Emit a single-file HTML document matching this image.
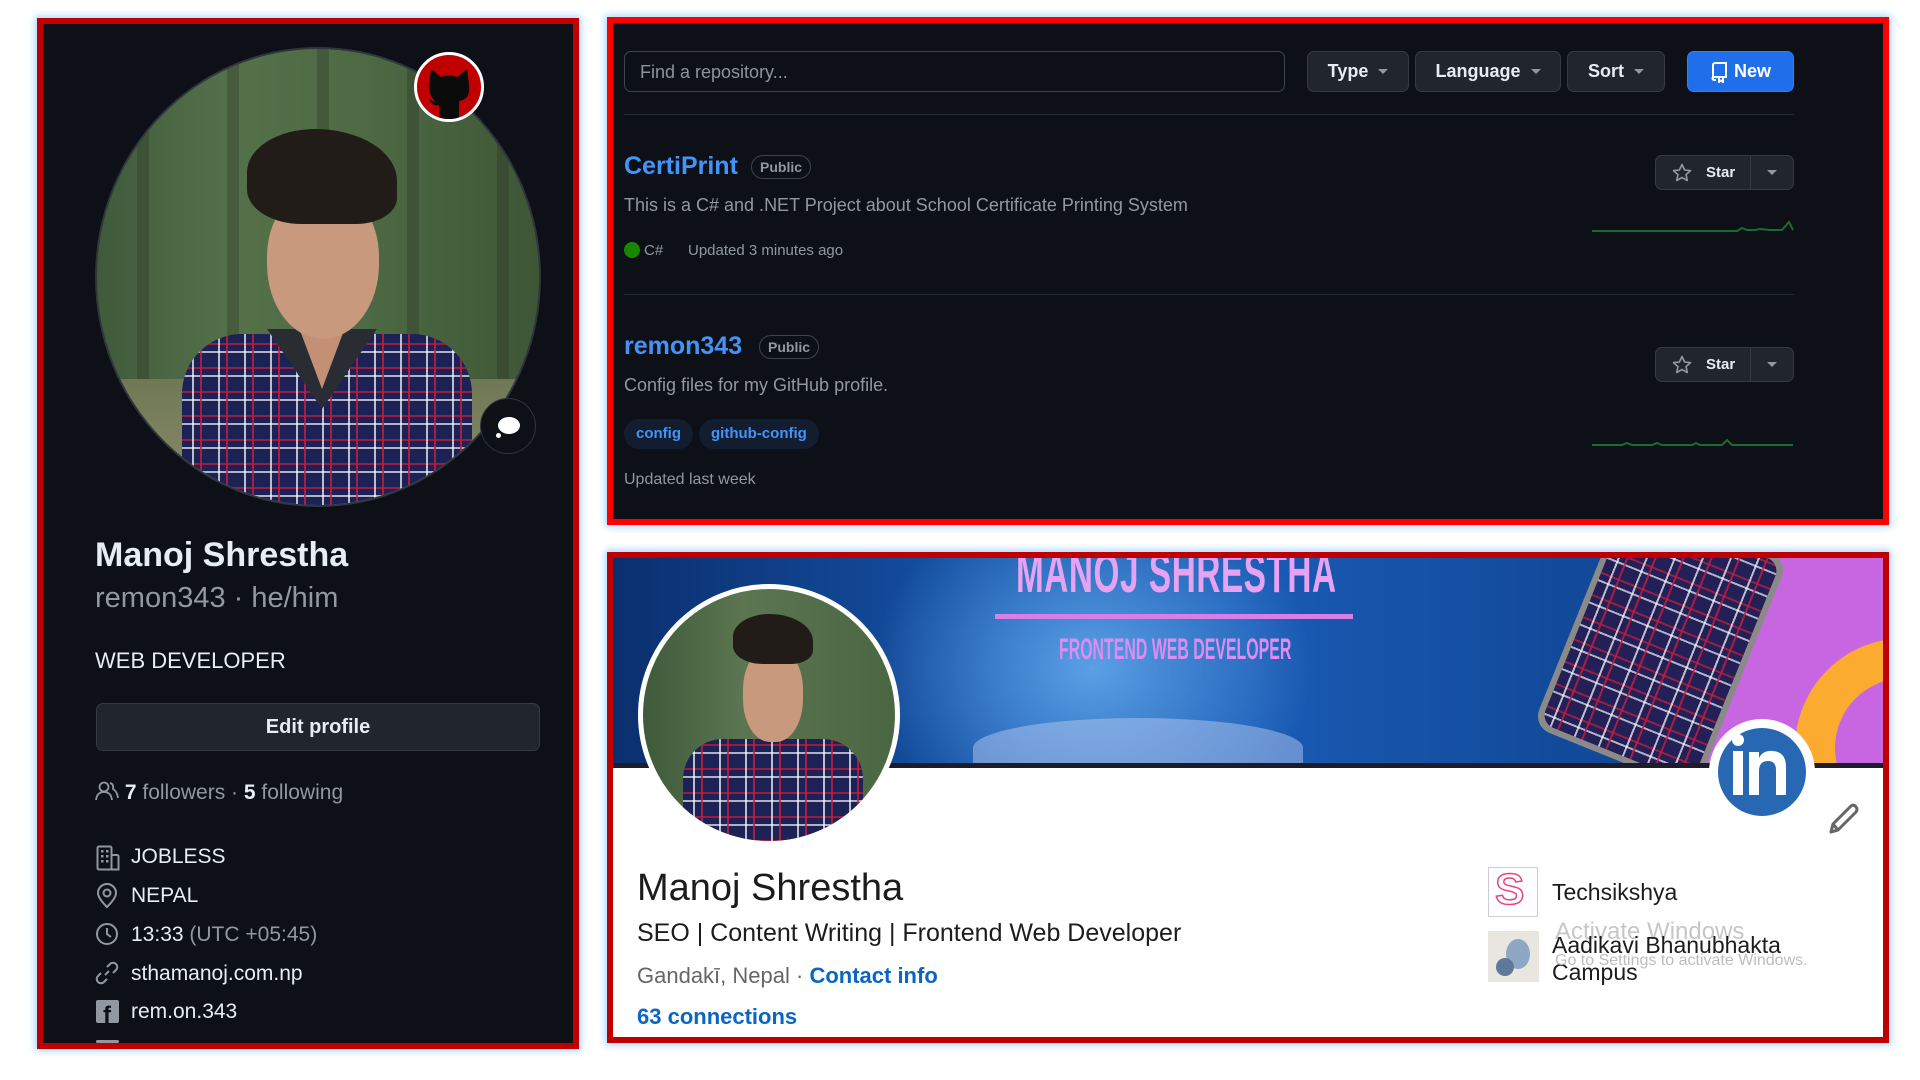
<!DOCTYPE html>
<html><head><meta charset="utf-8">
<style>
*{box-sizing:border-box;margin:0;padding:0}
body{width:1920px;height:1080px;background:#fff;position:relative;overflow:hidden;font-family:"Liberation Sans",sans-serif}
.abs{position:absolute}
.panel{position:absolute;box-shadow:0 0 7px 2px #a8d6ff}
.t{position:absolute;white-space:nowrap}
.gh{color:#e6edf3}
.btn{position:absolute;background:#21262d;border:1px solid #363b42;border-radius:7px;color:#e6edf3;font-weight:bold;font-size:18px;display:flex;align-items:center;justify-content:center}
.caret{display:inline-block;width:0;height:0;border-left:5px solid transparent;border-right:5px solid transparent;border-top:5px solid #9198a1;margin-left:10px}
.plaid{background:
 repeating-linear-gradient(90deg,transparent 0 10px,rgba(255,255,255,.7) 10px 12px,transparent 12px 18px,rgba(200,30,60,.8) 18px 20px,transparent 20px 26px),
 repeating-linear-gradient(0deg,transparent 0 9px,rgba(255,255,255,.65) 9px 11px,transparent 11px 17px,rgba(200,30,60,.7) 17px 19px,transparent 19px 24px),
 #1c2256}
.public{position:absolute;border:1px solid #3d444d;border-radius:12px;color:#9198a1;font-size:14px;font-weight:bold;height:24px;line-height:22px;padding:0 8px}
.tag{position:absolute;background:#121d2f;color:#4493f8;border-radius:15px;font-size:15px;font-weight:bold;height:30px;line-height:30px;padding:0 12px}
.meta{color:#9198a1}
</style></head><body>

<!-- LEFT GITHUB PANEL -->
<div class="panel" style="left:37px;top:18px;width:542px;height:1031px;background:#0d1117;border:6px solid #c00000"></div>
<div class="abs" style="left:95px;top:47px;width:446px;height:460px;border-radius:50%;overflow:hidden;border:2px solid #30363d;background:linear-gradient(90deg,#3f5a3a,#55714a 30%,#4d6a44 60%,#3e5636);">
  <div class="abs" style="left:0;top:0;width:100%;height:100%;background:repeating-linear-gradient(90deg,transparent 0 40px,rgba(40,45,30,.3) 40px 52px,transparent 52px 90px)"></div>
  <div class="abs" style="left:0;top:330px;width:100%;height:130px;background:linear-gradient(#6f7856,#8f8d6a)"></div>
  <div class="abs plaid" style="left:85px;top:285px;width:290px;height:220px;border-radius:60px 60px 0 0"></div>
  <div class="abs" style="left:170px;top:280px;width:110px;height:80px;background:#2a2c33;clip-path:polygon(0 0,100% 0,50% 100%)"></div>
  <div class="abs" style="left:195px;top:260px;width:60px;height:80px;background:#c39075;clip-path:polygon(0 0,100% 0,50% 100%)"></div>
  <div class="abs" style="left:170px;top:140px;width:112px;height:150px;border-radius:45% 45% 50% 50%;background:#c9997d"></div>
  <div class="abs" style="left:150px;top:80px;width:150px;height:95px;border-radius:50% 60% 30% 40%;background:#221c19"></div>
</div>
<div class="abs" style="left:414px;top:52px;width:70px;height:70px;border-radius:50%;background:#c00000;border:3px solid #fff;overflow:hidden">
  <svg width="64" height="64" viewBox="0 0 64 64" style="position:absolute;left:0;top:0"><path d="M14 14 L24 22 Q32 19 40 22 L50 14 L52 30 Q54 44 42 46 L42 64 L22 64 L22 50 Q16 52 12 44 Q16 46 20 48 Q12 42 12 30 Z" fill="#0b0b0b"/></svg>
</div>
<div class="abs" style="left:480px;top:398px;width:56px;height:56px;border-radius:50%;background:#0d1117;border:1px solid #30363d">
  <div class="abs" style="left:17px;top:18px;width:22px;height:17px;border-radius:50%;background:#fff"></div>
  <div class="abs" style="left:15px;top:34px;width:5px;height:5px;border-radius:50%;background:#fff"></div>
</div>
<div class="t" style="left:95px;top:536px;font-size:34px;font-weight:bold;color:#e6edf3">Manoj Shrestha</div>
<div class="t" style="left:95px;top:582px;font-size:29px;color:#9198a1">remon343 · he/him</div>
<div class="t" style="left:95px;top:648px;font-size:22px;color:#e6edf3">WEB DEVELOPER</div>
<div class="btn" style="left:96px;top:703px;width:444px;height:48px;font-size:20px">Edit profile</div>
<div class="t" style="left:95px;top:780px;font-size:21px;color:#9198a1">
 <svg width="24" height="22" viewBox="0 0 24 22" style="vertical-align:-3px"><circle cx="9" cy="7" r="4.5" fill="none" stroke="#9198a1" stroke-width="1.8"/><path d="M1 20 Q2 12 9 12 Q16 12 17 20" fill="none" stroke="#9198a1" stroke-width="1.8"/><path d="M15 3 Q19 4 18 9 Q22 11 23 18" fill="none" stroke="#9198a1" stroke-width="1.8"/></svg>
 <b style="color:#e6edf3">7</b> followers · <b style="color:#e6edf3">5</b> following</div>
<svg class="abs" style="left:96px;top:845px" width="24" height="26" viewBox="0 0 24 26"><rect x="1.5" y="1.5" width="14" height="23" rx="1.5" fill="none" stroke="#9198a1" stroke-width="2"/><path d="M15 10 H21 a1.5 1.5 0 0 1 1.5 1.5 V24.5 H15" fill="none" stroke="#9198a1" stroke-width="2"/><g fill="#9198a1"><rect x="5" y="5" width="2.5" height="2.5"/><rect x="10" y="5" width="2.5" height="2.5"/><rect x="5" y="10" width="2.5" height="2.5"/><rect x="10" y="10" width="2.5" height="2.5"/><rect x="5" y="15" width="2.5" height="2.5"/><rect x="10" y="15" width="2.5" height="2.5"/></g></svg>
<div class="t gh" style="left:131px;top:845px;font-size:21px">JOBLESS</div>
<svg class="abs" style="left:96px;top:883px" width="22" height="26" viewBox="0 0 22 26"><path d="M11 24 Q2 15 2 10 A9 9 0 0 1 20 10 Q20 15 11 24Z" fill="none" stroke="#9198a1" stroke-width="2"/><circle cx="11" cy="10" r="3.5" fill="none" stroke="#9198a1" stroke-width="2"/></svg>
<div class="t gh" style="left:131px;top:884px;font-size:21px">NEPAL</div>
<svg class="abs" style="left:95px;top:922px" width="24" height="24" viewBox="0 0 24 24"><circle cx="12" cy="12" r="10" fill="none" stroke="#9198a1" stroke-width="2"/><path d="M12 6 V12 L16 15" fill="none" stroke="#9198a1" stroke-width="2"/></svg>
<div class="t gh" style="left:131px;top:923px;font-size:21px">13:33 <span style="color:#9198a1">(UTC +05:45)</span></div>
<svg class="abs" style="left:95px;top:961px" width="24" height="24" viewBox="0 0 24 24"><path d="M10 14 L14 10 M12 6 L15 3 a4 4 0 0 1 6 6 L18 12 M12 18 L9 21 a4 4 0 0 1 -6 -6 L6 12" fill="none" stroke="#9198a1" stroke-width="2"/></svg>
<div class="t gh" style="left:131px;top:962px;font-size:21px">sthamanoj.com.np</div>
<div class="abs" style="left:96px;top:1000px;width:23px;height:23px;background:#9198a1;border-radius:2px;overflow:hidden"><div class="t" style="left:7px;top:2px;font-size:24px;font-weight:bold;color:#0d1117">f</div></div>
<div class="t gh" style="left:131px;top:1000px;font-size:21px">rem.on.343</div>
<div class="abs" style="left:96px;top:1040px;width:23px;height:3px;background:#9198a1;border-radius:2px"></div>

<!-- RIGHT TOP GITHUB REPOS -->
<div class="panel" style="left:607px;top:17px;width:1282px;height:508px;background:#0d1117;border:6px solid #ff0000"></div>
<div class="abs" style="left:624px;top:51px;width:661px;height:41px;border:1px solid #3d444d;border-radius:7px;background:#0d1117"></div>
<div class="t" style="left:640px;top:62px;font-size:18px;color:#8b949e">Find a repository...</div>
<div class="btn" style="left:1307px;top:51px;width:102px;height:41px">Type<span class="caret"></span></div>
<div class="btn" style="left:1415px;top:51px;width:146px;height:41px">Language<span class="caret"></span></div>
<div class="btn" style="left:1567px;top:51px;width:98px;height:41px">Sort<span class="caret"></span></div>
<div class="btn" style="left:1687px;top:51px;width:107px;height:41px;background:#1f6feb;border-color:#2f81f7;color:#fff">
 <svg width="18" height="22" viewBox="0 0 18 22" style="margin-right:6px"><path d="M3 18 V4 a2 2 0 0 1 2 -2 H16 V16 H4 a1.5 1.5 0 0 0 0 3 H6 M9 16 V21 L11 19.5 L13 21 V16" fill="none" stroke="#fff" stroke-width="2"/></svg>New</div>
<div class="abs" style="left:624px;top:114px;width:1170px;height:1px;background:#262c34"></div>

<div class="t" style="left:624px;top:152px;font-size:25px;font-weight:bold;color:#4493f8">CertiPrint</div>
<div class="public" style="left:751px;top:155px">Public</div>
<div class="t meta" style="left:624px;top:195px;font-size:18px">This is a C# and .NET Project about School Certificate Printing System</div>
<div class="abs" style="left:624px;top:242px;width:16px;height:16px;border-radius:50%;background:#178600"></div>
<div class="t meta" style="left:644px;top:242px;font-size:15px">C#</div>
<div class="t meta" style="left:688px;top:242px;font-size:15px">Updated 3 minutes ago</div>
<div class="btn" style="left:1655px;top:155px;width:139px;height:35px;font-size:15px;justify-content:flex-start;padding-left:16px">
 <svg width="20" height="20" viewBox="0 0 20 20"><path d="M10 1.5 L12.6 7 L18.5 7.6 L14 11.6 L15.3 17.5 L10 14.5 L4.7 17.5 L6 11.6 L1.5 7.6 L7.4 7Z" fill="none" stroke="#9198a1" stroke-width="1.6" stroke-linejoin="round"/></svg>
 <span style="margin-left:14px">Star</span></div>
<div class="abs" style="left:1750px;top:156px;width:1px;height:33px;background:#363b42"></div>
<div class="abs" style="left:1767px;top:170px;border-left:5px solid transparent;border-right:5px solid transparent;border-top:5px solid #9198a1"></div>
<svg class="abs" style="left:1592px;top:218px" width="202" height="16" viewBox="0 0 202 16"><polyline points="0,13 145,13 150,10 155,12 163,12 168,11 178,12 190,12 197,4 201,12" fill="none" stroke="#196c2e" stroke-width="2"/></svg>
<div class="abs" style="left:624px;top:294px;width:1170px;height:1px;background:#262c34"></div>

<div class="t" style="left:624px;top:332px;font-size:25px;font-weight:bold;color:#4493f8">remon343</div>
<div class="public" style="left:759px;top:335px">Public</div>
<div class="t meta" style="left:624px;top:375px;font-size:18px">Config files for my GitHub profile.</div>
<div class="tag" style="left:624px;top:419px">config</div>
<div class="tag" style="left:699px;top:419px">github-config</div>
<div class="t meta" style="left:624px;top:471px;font-size:16px">Updated last week</div>
<div class="btn" style="left:1655px;top:347px;width:139px;height:35px;font-size:15px;justify-content:flex-start;padding-left:16px">
 <svg width="20" height="20" viewBox="0 0 20 20"><path d="M10 1.5 L12.6 7 L18.5 7.6 L14 11.6 L15.3 17.5 L10 14.5 L4.7 17.5 L6 11.6 L1.5 7.6 L7.4 7Z" fill="none" stroke="#9198a1" stroke-width="1.6" stroke-linejoin="round"/></svg>
 <span style="margin-left:14px">Star</span></div>
<div class="abs" style="left:1750px;top:348px;width:1px;height:33px;background:#363b42"></div>
<div class="abs" style="left:1767px;top:362px;border-left:5px solid transparent;border-right:5px solid transparent;border-top:5px solid #9198a1"></div>
<svg class="abs" style="left:1592px;top:433px" width="202" height="16" viewBox="0 0 202 16"><polyline points="0,12 30,12 35,10 40,12 60,12 65,10 70,12 100,12 104,10 108,12 130,12 135,7 140,12 201,12" fill="none" stroke="#196c2e" stroke-width="2"/></svg>

<!-- BOTTOM LINKEDIN PANEL -->
<div class="panel" style="left:607px;top:552px;width:1282px;height:491px;background:#fff;border:6px solid #c00000;overflow:hidden">
  <div class="abs" style="left:0;top:0;width:1270px;height:210px;background:radial-gradient(ellipse 220px 180px at 480px 110px,#5aa0e6,rgba(40,100,190,0) 100%),linear-gradient(90deg,#0b2f6e,#1553a8 30%,#1a5bb5 50%,#124a9a 75%,#0d3a80);overflow:hidden">
    <div class="abs" style="left:360px;top:160px;width:330px;height:60px;border-radius:50% 50% 0 0;background:rgba(180,200,240,.5)"></div>
    <div class="t" style="left:403px;top:-18px;font-size:56px;font-weight:bold;color:#e7a3f2;transform:scaleX(.594);transform-origin:left top;letter-spacing:1px">MANOJ SHRESTHA</div>
    <div class="abs" style="left:382px;top:56px;width:358px;height:5px;background:#d77fe6"></div>
    <div class="t" style="left:446px;top:75px;font-size:30px;font-weight:bold;color:#df8cf0;transform:scaleX(.53);transform-origin:left top">FRONTEND WEB DEVELOPER</div>
    <div class="abs" style="left:228px;top:90px;width:8px;height:115px;background:repeating-linear-gradient(0deg,#cfe0ff 0 3px,transparent 3px 7px);opacity:.8"></div>
    <div class="abs" style="left:1110px;top:-20px;width:300px;height:260px;background:#c866e2;transform:skewX(-17deg)"></div>
    <div class="abs" style="left:1182px;top:80px;width:220px;height:220px;border-radius:50%;border:40px solid #fbab2f"></div>
    <div class="abs" style="left:960px;top:-40px;width:175px;height:250px;background:#8a8a88;border-radius:18px;transform:rotate(22deg)">
      <div class="abs plaid" style="left:6px;top:6px;width:163px;height:238px;border-radius:14px;background-color:#232058"></div>
    </div>
    <div class="abs" style="left:0;top:205px;width:1270px;height:5px;background:#1c1c2a"></div>
  </div>
</div>
<div class="abs" style="left:638px;top:584px;width:262px;height:262px;border-radius:50%;border:5px solid #fff;overflow:hidden;background:linear-gradient(90deg,#3f5a3a,#5b7650 40%,#4a6642);">
  <div class="abs plaid" style="left:40px;top:150px;width:180px;height:120px;border-radius:40px 40px 0 0"></div>
  <div class="abs" style="left:100px;top:58px;width:60px;height:95px;border-radius:45%;background:#c9997d"></div>
  <div class="abs" style="left:90px;top:25px;width:80px;height:50px;border-radius:50% 60% 30% 40%;background:#221c19"></div>
</div>
<div class="abs" style="left:1709px;top:719px;width:106px;height:106px;border-radius:50%;background:#fff"></div>
<div class="abs" style="left:1718px;top:728px;width:88px;height:88px;border-radius:50%;background:#2867b2"></div>
<div class="abs" style="left:1733px;top:751px;width:10px;height:44px;background:#fff"></div>
<div class="abs" style="left:1732px;top:734px;width:12px;height:12px;border-radius:50%;background:#fff"></div>
<svg class="abs" style="left:1748px;top:749px" width="40" height="48" viewBox="0 0 40 48"><path d="M1 3 H11 V9 Q15 1 25 2 Q38 3 38 18 V46 H28 V21 Q28 12 20 12 Q11 12 11 22 V46 H1Z" fill="#fff"/></svg>
<svg class="abs" style="left:1827px;top:802px" width="34" height="34" viewBox="0 0 34 34"><path d="M4 30 L6 22 L24 4 Q27 2 29 5 Q31 7 29 10 L11 28 Z M6 22 L11 28" fill="none" stroke="#666" stroke-width="3" stroke-linejoin="round"/></svg>

<div class="t" style="left:637px;top:867px;font-size:38px;color:#1c1c1c">Manoj Shrestha</div>
<div class="t" style="left:637px;top:919px;font-size:25px;color:#1c1c1c">SEO | Content Writing | Frontend Web Developer</div>
<div class="t" style="left:637px;top:963px;font-size:22px;color:#666">Gandakī, Nepal · <span style="color:#0a66c2;font-weight:bold">Contact info</span></div>
<div class="t" style="left:637px;top:1004px;font-size:22px;color:#0a66c2;font-weight:bold">63 connections</div>

<div class="abs" style="left:1488px;top:867px;width:50px;height:50px;border:1px solid #ccc;background:#fff">
  <div class="t" style="left:6px;top:-3px;font-size:44px;font-weight:bold;color:#fff;-webkit-text-stroke:1.5px #e8467a">S</div>
</div>
<div class="t" style="left:1552px;top:879px;font-size:23px;color:#1c1c1c">Techsikshya</div>
<div class="abs" style="left:1488px;top:931px;width:51px;height:51px;background:#e9e6e0;overflow:hidden">
  <div class="abs" style="left:18px;top:8px;width:24px;height:30px;border-radius:50%;background:#8fa6c4"></div>
  <div class="abs" style="left:8px;top:27px;width:18px;height:18px;border-radius:50%;background:#5e7a9a"></div>
</div>
<div class="t" style="left:1555px;top:918px;font-size:24px;color:#c6c6c6">Activate Windows</div>
<div class="t" style="left:1552px;top:932px;font-size:23px;color:#1c1c1c;line-height:27px">Aadikavi Bhanubhakta<br>Campus</div>
<div class="t" style="left:1555px;top:952px;font-size:16px;color:#bdbdbd">Go to Settings to activate Windows.</div>
</body></html>
